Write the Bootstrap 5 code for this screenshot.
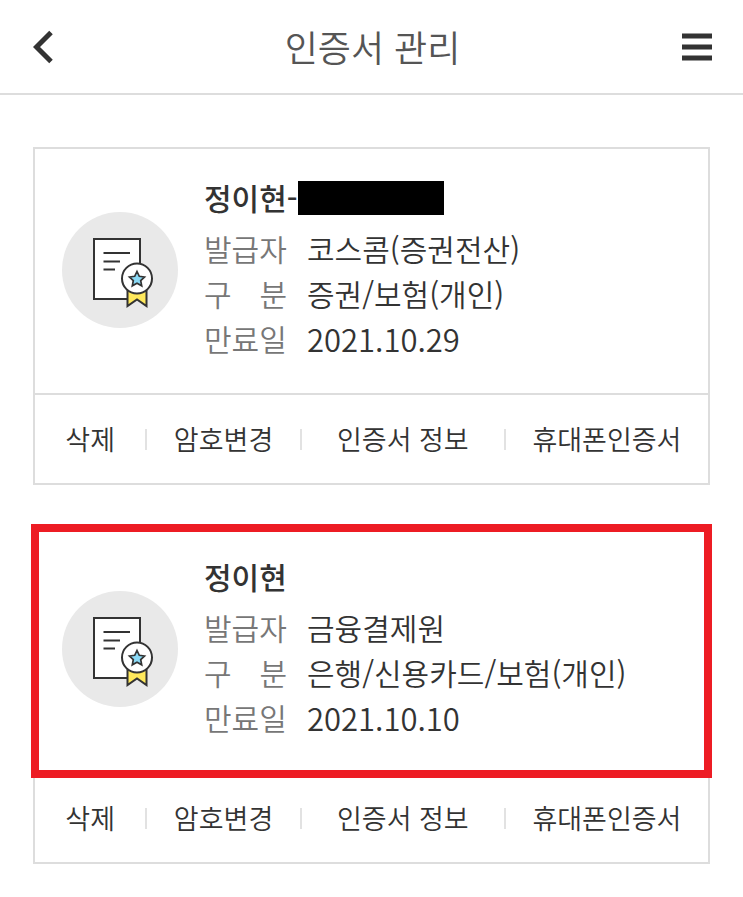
<!DOCTYPE html>
<html lang="ko">
<head>
<meta charset="utf-8">
<meta name="viewport" content="width=device-width, initial-scale=1">
<title>인증서 관리</title>
<link href="https://cdn.jsdelivr.net/npm/bootstrap@5.3.0/dist/css/bootstrap.min.css" rel="stylesheet">
<style>
  body { font-family: "Noto Sans CJK KR", sans-serif; font-weight: 350; font-size: 30px; line-height: 45px; color: #333; background: #fff; }
  .topbar { border-bottom: 2px solid #ddd; padding: 20px 31px 20px 33px; }
  .topbar h1 { font-size: 36px; line-height: 53px; font-weight: 350; color: #555; }
  .icon-btn { width: 30px; color: #333; }
  .page { padding: 52px 33px 33px; }
  .cert { border: 2px solid #ddd; border-radius: 0; color: inherit; }
  .cert-info { padding: 26px 27px 32px; border-bottom: 2px solid #ddd; }
  .cert.selected .cert-info { outline: 8px solid #ed1c24; outline-offset: -4px; }
  .cert-list { gap: 41px; }
  .cert-body { gap: 26px; }
  .seal { width: 116px; height: 116px; margin-top: 4px; }
  .owner { font-size: 30px; line-height: 45px; font-weight: 500; margin-bottom: 6px; }
  .redacted { width: 146px; height: 34px; background: #000; }
  .field { gap: 20px; }
  .field dt { width: 83px; font-weight: 350; color: #777; text-align-last: justify; }
  .field time { font-size: 31px; }
  .action { flex: 1 1 0; }
  .action-pw { flex-grow: 1.4; }
  .action-info, .action-phone { flex-grow: 1.85; }
  .action + .action::before { content: ""; width: 2px; height: 21px; background: #e2e2e2; }
  .action .btn { font-size: 27px; line-height: 40px; font-weight: 350; color: #333; padding: 24px 0; }
</style>
</head>
<body>
<svg class="d-none" aria-hidden="true">
  <symbol id="seal" viewBox="0 0 116 116">
    <circle cx="58" cy="58" r="58" fill="#e9e9e9"/>
    <rect x="32" y="27" width="46" height="60" fill="#fff" stroke="#333" stroke-width="2"/>
    <path d="M41.500 41H68M41.500 49.500H58M41.500 57.500H53" fill="none" stroke="#333" stroke-width="2"/>
    <path d="M65.500 76V94L75 87.500L84.500 94V76Z" fill="#ffe95c" stroke="#333" stroke-width="2"/>
    <circle cx="75" cy="66.500" r="15" fill="#fff" stroke="#333" stroke-width="2"/>
    <path d="M75 59.500L77.300 64.300L82.500 65L78.700 68.600L79.700 73.800L75 71.200L70.300 73.800L71.300 68.600L67.500 65L72.700 64.300Z" fill="#8ad9f5" stroke="#333" stroke-width="1.700"/>
  </symbol>
</svg>

<header class="topbar d-flex align-items-center justify-content-between">
  <button type="button" class="icon-btn btn border-0 p-0 d-flex" aria-label="뒤로">
    <svg width="22" height="34" viewBox="0 0 22 34" fill="none" stroke="currentColor" stroke-width="5"><path d="M18 2.500L3.500 17L18 31.500"/></svg>
  </button>
  <h1 class="m-0">인증서 관리</h1>
  <button type="button" class="icon-btn btn border-0 p-0 d-flex" aria-label="메뉴">
    <svg width="30" height="28" viewBox="0 0 30 28" fill="currentColor"><path d="M0 0.500h30v5H0zM0 11.500h30v5H0zM0 22.500h30v5H0z"/></svg>
  </button>
</header>

<main class="page">
  <div class="cert-list d-flex flex-column">
    <article class="cert card">
      <div class="cert-info">
        <div class="cert-body d-flex align-items-center">
          <svg class="seal flex-shrink-0" aria-hidden="true"><use href="#seal"/></svg>
          <div>
            <h2 class="owner d-flex align-items-center">정이현-<span class="redacted"></span></h2>
            <dl class="m-0">
              <div class="field d-flex"><dt>발급자</dt><dd class="m-0">코스콤(증권전산)</dd></div>
              <div class="field d-flex"><dt>구 분</dt><dd class="m-0">증권/보험(개인)</dd></div>
              <div class="field d-flex"><dt>만료일</dt><dd class="m-0"><time class="d-block" datetime="2021-10-29">2021.10.29</time></dd></div>
            </dl>
          </div>
        </div>
      </div>
      <ul class="list-unstyled d-flex m-0">
        <li class="action d-flex align-items-center"><button type="button" class="btn border-0 flex-grow-1">삭제</button></li>
        <li class="action action-pw d-flex align-items-center"><button type="button" class="btn border-0 flex-grow-1">암호변경</button></li>
        <li class="action action-info d-flex align-items-center"><button type="button" class="btn border-0 flex-grow-1">인증서 정보</button></li>
        <li class="action action-phone d-flex align-items-center"><button type="button" class="btn border-0 flex-grow-1">휴대폰인증서</button></li>
      </ul>
    </article>

    <article class="cert card selected">
      <div class="cert-info">
        <div class="cert-body d-flex align-items-center">
          <svg class="seal flex-shrink-0" aria-hidden="true"><use href="#seal"/></svg>
          <div>
            <h2 class="owner">정이현</h2>
            <dl class="m-0">
              <div class="field d-flex"><dt>발급자</dt><dd class="m-0">금융결제원</dd></div>
              <div class="field d-flex"><dt>구 분</dt><dd class="m-0">은행/신용카드/보험(개인)</dd></div>
              <div class="field d-flex"><dt>만료일</dt><dd class="m-0"><time class="d-block" datetime="2021-10-10">2021.10.10</time></dd></div>
            </dl>
          </div>
        </div>
      </div>
      <ul class="list-unstyled d-flex m-0">
        <li class="action d-flex align-items-center"><button type="button" class="btn border-0 flex-grow-1">삭제</button></li>
        <li class="action action-pw d-flex align-items-center"><button type="button" class="btn border-0 flex-grow-1">암호변경</button></li>
        <li class="action action-info d-flex align-items-center"><button type="button" class="btn border-0 flex-grow-1">인증서 정보</button></li>
        <li class="action action-phone d-flex align-items-center"><button type="button" class="btn border-0 flex-grow-1">휴대폰인증서</button></li>
      </ul>
    </article>
  </div>
</main>
<script src="https://cdn.jsdelivr.net/npm/bootstrap@5.3.0/dist/js/bootstrap.bundle.min.js"></script>
</body>
</html>
